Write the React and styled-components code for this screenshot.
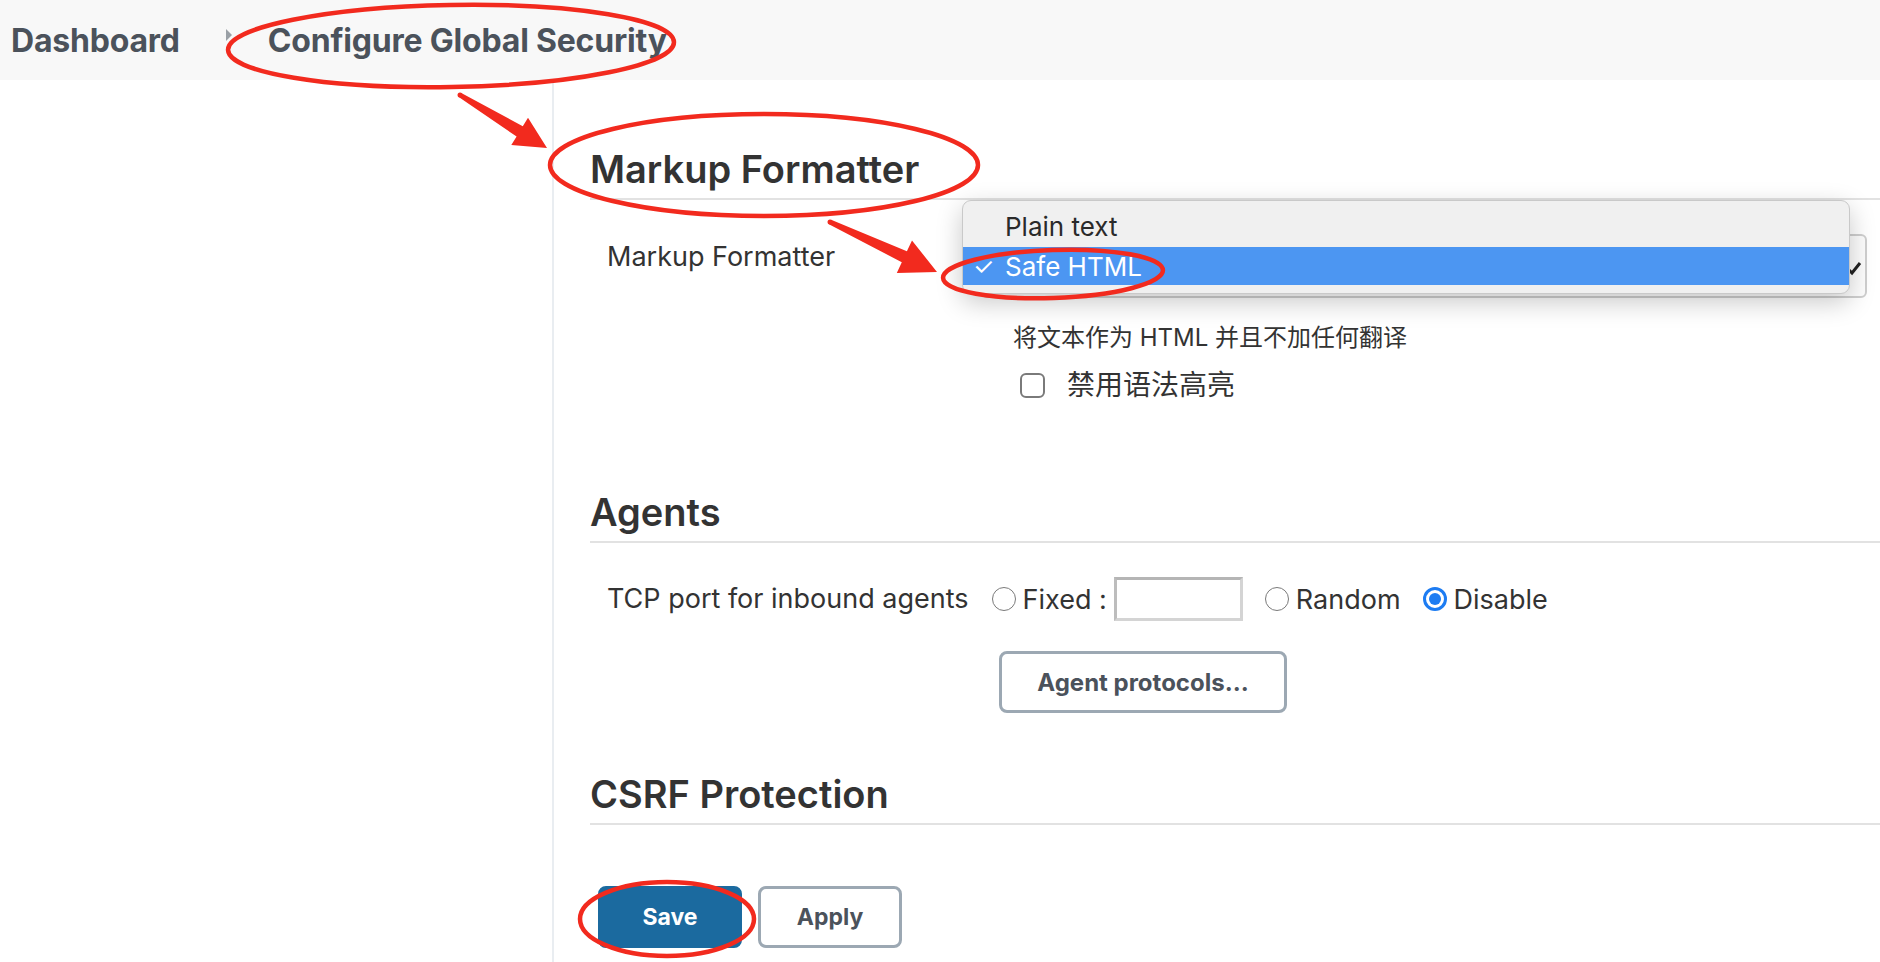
import React from "react";
import styled, { createGlobalStyle } from "styled-components";

const GlobalStyle = createGlobalStyle`
  html, body {
    margin: 0;
    padding: 0;
    background: #ffffff;
  }
  body {
    font-family: "Inter", "Noto Sans CJK SC", sans-serif;
    color: #333333;
    overflow: hidden;
  }
`;

const Page = styled.div`
  position: relative;
  width: 1880px;
  height: 962px;
  overflow: hidden;
`;

const Header = styled.header`
  height: 80px;
  background: #f8f8f8;
  display: flex;
  align-items: center;
  padding-left: 11px;
  box-sizing: border-box;
`;

const Crumb = styled.span`
  font-size: 32px;
  font-weight: 700;
  color: #4b525b;
  letter-spacing: -0.2px;
`;

const Chevron = styled.span`
  width: 0;
  height: 0;
  margin: -10px 36px 0 46px;
  border-top: 6px solid transparent;
  border-bottom: 6px solid transparent;
  border-left: 6px solid #9aa0a6;
`;

const Layout = styled.div`
  display: flex;
  height: 882px;
`;

const Sidebar = styled.aside`
  width: 552px;
  flex-shrink: 0;
  border-right: 2px solid #e9edf1;
`;

const Main = styled.main`
  flex: 1;
  padding: 68px 0 0 36px;
`;

const SectionTitle = styled.h2`
  margin: ${(p) => p.$top || 0}px 0 0;
  font-size: 38px;
  line-height: 43px;
  font-weight: 600;
  color: #333333;
  padding-bottom: 7px;
  border-bottom: 2px solid #e2e2e2;
`;

const FieldRow = styled.div`
  display: flex;
  align-items: flex-start;
  margin-top: ${(p) => p.$top}px;
  padding: 0 13px 0 17px;
`;

const Label = styled.div`
  width: ${(p) => (p.$width ? `${p.$width}px` : "auto")};
  flex-shrink: 0;
  font-size: 27px;
  line-height: 30px;
  padding-top: ${(p) => p.$padTop || 0}px;
  color: #333333;
`;

const Control = styled.div`
  flex: 1;
  display: flex;
  flex-direction: column;
`;

const SelectBox = styled.div`
  position: relative;
  height: 64px;
  border: 2px solid #cfcfcf;
  border-radius: 6px;
  box-sizing: border-box;
  background: #fdfdfd;
`;

const SelectArrow = styled.svg`
  position: absolute;
  right: 3px;
  top: 24px;
`;

const Popup = styled.div`
  position: absolute;
  left: -21px;
  right: 15px;
  top: -36px;
  padding: 4px 0 8px;
  background: #f0f0f0;
  border: 1px solid #c9c9c9;
  border-radius: 9px;
  box-shadow: 0 8px 26px rgba(0, 0, 0, 0.22);
`;

const Option = styled.div`
  display: flex;
  align-items: center;
  height: ${(p) => (p.$active ? 38 : 42)}px;
  padding-left: 42px;
  position: relative;
  font-size: 26px;
  color: ${(p) => (p.$active ? "#ffffff" : "#2a2a2a")};
  background: ${(p) => (p.$active ? "#4c96f2" : "transparent")};
`;

const CheckMark = styled.span`
  position: absolute;
  left: 10px;
  font-size: 24px;
`;

const Description = styled.div`
  margin: 25px 0 0 32px;
  font-size: 24px;
  line-height: 30px;
  color: #333333;
`;

const CheckRow = styled.label`
  display: flex;
  align-items: center;
  gap: 22px;
  margin: 17px 0 0 39px;
  font-size: 28px;
  line-height: 30px;
  color: #333333;
`;

const CheckBox = styled.span`
  width: 25px;
  height: 25px;
  box-sizing: border-box;
  border: 2px solid #7a7a7a;
  border-radius: 6px;
  background: #ffffff;
`;

const InlineRow = styled.div`
  display: flex;
  align-items: center;
  height: 44px;
  margin-top: 34px;
  padding-left: 17px;
`;

const RadioGroup = styled.div`
  display: flex;
  align-items: center;
  gap: 22px;
  margin-left: 23px;
`;

const RadioOption = styled.label`
  display: flex;
  align-items: center;
  gap: 7px;
  font-size: 27px;
  color: #333333;
`;

const Radio = styled.span`
  width: 24px;
  height: 24px;
  flex-shrink: 0;
  box-sizing: border-box;
  border-radius: 50%;
  border: ${(p) => (p.$checked ? "3px solid #1d7cf2" : "1.5px solid #7a7a7a")};
  background: #ffffff;
  display: flex;
  align-items: center;
  justify-content: center;

  &::after {
    content: "";
    display: ${(p) => (p.$checked ? "block" : "none")};
    width: 12px;
    height: 12px;
    border-radius: 50%;
    background: #1d7cf2;
  }
`;

const PortInput = styled.input`
  width: 129px;
  height: 44px;
  box-sizing: border-box;
  border: 3px solid #d4d4d4;
  border-top-color: #b5b5b5;
  border-left-color: #bdbdbd;
  background: #ffffff;
  outline: none;
`;

const ButtonRow = styled.div`
  display: flex;
  gap: 16px;
  margin: ${(p) => p.$top}px 0 0 ${(p) => p.$left}px;
`;

const Button = styled.button`
  height: 62px;
  width: ${(p) => p.$width}px;
  box-sizing: border-box;
  border-radius: 8px;
  border: 3px solid ${(p) => (p.$primary ? "#1b6a9f" : "#9ca8b3")};
  background: ${(p) => (p.$primary ? "#1b6a9f" : "#ffffff")};
  color: ${(p) => (p.$primary ? "#ffffff" : "#4b525b")};
  font-family: "Inter", sans-serif;
  font-size: ${(p) => p.$size || 23}px;
  font-weight: 700;
  padding: 0;
`;

const Annotations = styled.svg`
  position: absolute;
  left: 0;
  top: 0;
  pointer-events: none;
`;

const RED = "#f22a1e";

// tapered arrow from tail to tip, computed as a polygon
function arrowPoints(x1, y1, x2, y2, headLen, headHalf) {
  const dx = x2 - x1;
  const dy = y2 - y1;
  const len = Math.hypot(dx, dy);
  const ux = dx / len;
  const uy = dy / len;
  const nx = -uy;
  const ny = ux;
  const bx = x2 - ux * headLen;
  const by = y2 - uy * headLen;
  const pts = [
    [x1 + nx * 2.5, y1 + ny * 2.5],
    [bx + nx * 6, by + ny * 6],
    [bx + nx * headHalf, by + ny * headHalf],
    [x2, y2],
    [bx - nx * headHalf, by - ny * headHalf],
    [bx - nx * 6, by - ny * 6],
    [x1 - nx * 2.5, y1 - ny * 2.5],
  ];
  return pts.map((p) => p.map((v) => v.toFixed(1)).join(",")).join(" ");
}

const App = () => {
  return (
    <Page>
      <GlobalStyle />
      <Header>
        <Crumb>Dashboard</Crumb>
        <Chevron />
        <Crumb>Configure Global Security</Crumb>
      </Header>
      <Layout>
        <Sidebar />
        <Main>
          <SectionTitle>Markup Formatter</SectionTitle>
          <FieldRow $top={34}>
            <Label $width={374} $padTop={8}>
              Markup Formatter
            </Label>
            <Control>
              <SelectBox>
                <SelectArrow width="16" height="16" viewBox="0 0 16 16">
                  <path d="M2 9 L6 13 L14 3" fill="none" stroke="#222" strokeWidth="3" />
                </SelectArrow>
                <Popup>
                  <Option>Plain text</Option>
                  <Option $active>
                    <CheckMark>✓</CheckMark>
                    Safe HTML
                  </Option>
                </Popup>
              </SelectBox>
              <Description>将文本作为 HTML 并且不加任何翻译</Description>
              <CheckRow>
                <CheckBox />
                禁用语法高亮
              </CheckRow>
            </Control>
          </FieldRow>

          <SectionTitle $top={91}>Agents</SectionTitle>
          <InlineRow>
            <Label>TCP port for inbound agents</Label>
            <RadioGroup>
              <RadioOption>
                <Radio />
                Fixed :
                <PortInput />
              </RadioOption>
              <RadioOption>
                <Radio />
                Random
              </RadioOption>
              <RadioOption>
                <Radio $checked />
                Disable
              </RadioOption>
            </RadioGroup>
          </InlineRow>
          <ButtonRow $top={30} $left={409}>
            <Button $width={288} $size={24}>
              Agent protocols...
            </Button>
          </ButtonRow>

          <SectionTitle $top={60}>CSRF Protection</SectionTitle>
          <ButtonRow $top={61} $left={8}>
            <Button $primary $width={144}>
              Save
            </Button>
            <Button $width={144}>Apply</Button>
          </ButtonRow>
        </Main>
      </Layout>

      <Annotations width="1880" height="962" viewBox="0 0 1880 962">
        <g fill="none" stroke={RED} strokeWidth="4.5">
          <ellipse cx="451" cy="46" rx="223" ry="41" transform="rotate(-1 451 46)" />
          <ellipse cx="764" cy="165" rx="214" ry="51" />
          <ellipse cx="1053" cy="274" rx="110" ry="24" transform="rotate(-2 1053 274)" />
          <ellipse cx="667" cy="919" rx="87" ry="37" />
        </g>
        <g fill={RED}>
          <polygon points={arrowPoints(460, 95, 547, 148, 32, 16)} />
          <circle cx="460" cy="95" r="2.5" />
          <polygon points={arrowPoints(830, 222, 937, 272, 36, 18)} />
          <circle cx="830" cy="222" r="2.5" />
        </g>
      </Annotations>
    </Page>
  );
};

export default App;
